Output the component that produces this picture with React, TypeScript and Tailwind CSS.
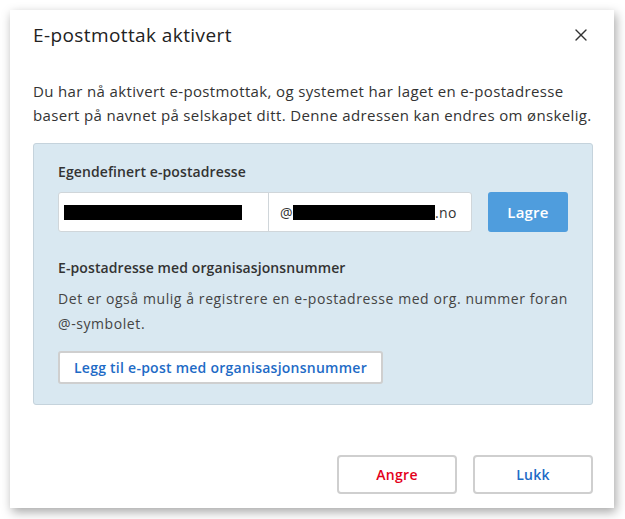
import { X } from 'lucide-react';

const font = { fontFamily: "'Open Sans', 'Noto Sans', sans-serif" };

const App = () => {
  return (
    <div className="w-[625px] h-[519px] bg-white p-[10px] pr-[11px] pb-[11px]" style={font}>
      <div className="flex h-full flex-col bg-white pl-[23px] pr-[21px] shadow-[2px_4px_10px_rgba(0,0,0,0.35)]">
        {/* header */}
        <div className="flex h-[50px] items-center justify-between">
          <h2 className="text-[19px] font-normal tracking-[0.4px] text-[#222]">E-postmottak aktivert</h2>
          <button className="mr-[2px] text-[#333]">
            <X className="h-5 w-5" strokeWidth={1.6} />
          </button>
        </div>

        <p className="mt-[19px] whitespace-nowrap text-[15px] leading-[24px] tracking-[0.36px] text-[#333]">
          Du har nå aktivert e-postmottak, og systemet har laget en e-postadresse
          <br />
          basert på navnet på selskapet ditt. Denne adressen kan endres om ønskelig.
        </p>

        <div className="mt-[16px] rounded-[3px] border border-[#c5d3dc] bg-[#d9e8f1] px-[24px] pt-[18px] pb-[20px]">
          <div className="text-[14px] font-semibold leading-[20px] tracking-[0.1px] text-[#333]">Egendefinert e-postadresse</div>
          <div className="mt-[10px] flex items-center">
            <div className="flex h-[40px] w-[414px] rounded-[3px] border border-[#d0d6da] bg-white">
              <div className="flex w-[210px] items-center border-r border-[#d0d6da] px-[5px]">
                <div className="h-[15px] w-[178px] bg-black" />
              </div>
              <div className="flex flex-1 items-center pl-[11px] text-[14px] tracking-[0.4px] text-[#333]">
                <span>@</span>
                <div className="h-[15px] w-[142px] bg-black" />
                <span>.no</span>
              </div>
            </div>
            <button className="ml-[16px] h-[40px] w-[80px] rounded-[3px] bg-[#4f9ddd] text-[15px] font-semibold tracking-[0.2px] text-white">
              Lagre
            </button>
          </div>

          <div className="mt-[26px] text-[14px] font-semibold leading-[20px] tracking-[0.1px] text-[#333]">
            E-postadresse med organisasjonsnummer
          </div>
          <p className="mt-[8px] whitespace-nowrap text-[14px] leading-[25px] tracking-[0.58px] text-[#444]">
            Det er også mulig å registrere en e-postadresse med org. nummer foran
            <br />
            @-symbolet.
          </p>
          <button className="mt-[15px] h-[33px] rounded-[3px] border-2 border-[#cfcfcf] bg-white px-[14px] text-[14px] font-semibold tracking-[0.25px] text-[#1e6bc6]">
            Legg til e-post med organisasjonsnummer
          </button>
        </div>

        {/* footer */}
        <div className="mt-auto mb-[14px] flex justify-end gap-[16px]">
          <button className="h-[39px] w-[120px] rounded-[4px] border-2 border-[#cfcfcf] bg-white text-[14px] font-semibold tracking-[0.3px] text-[#e3001b]">
            Angre
          </button>
          <button className="h-[39px] w-[120px] rounded-[4px] border-2 border-[#cfcfcf] bg-white text-[14px] font-semibold tracking-[0.3px] text-[#1e6bc6]">
            Lukk
          </button>
        </div>
      </div>
    </div>
  );
};

export default App;
